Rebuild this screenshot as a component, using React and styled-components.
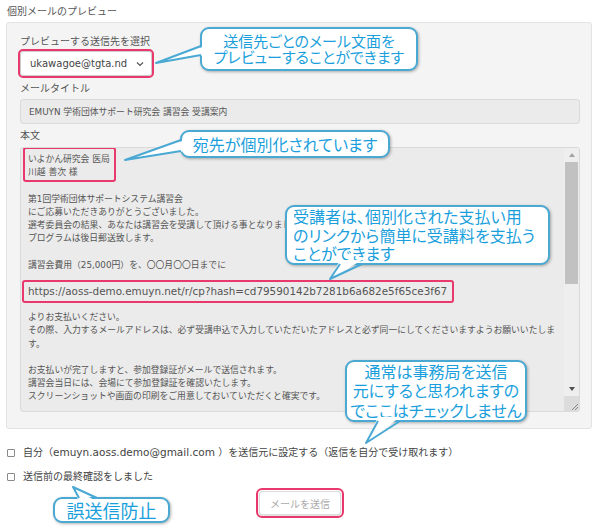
import styled, { createGlobalStyle } from "styled-components";

const GlobalStyle = createGlobalStyle`
  html, body { margin: 0; padding: 0; background: #fff; }
  body { font-family: "DejaVu Sans", "Noto Sans CJK JP", sans-serif; }
`;

const PINK = "#e8386c";
const BLUE = "#1b9fdc";
const BLUE_LINE = "#4aa9d3";

const Page = styled.div`
  position: relative;
  width: 600px;
  height: 529px;
  overflow: hidden;
  color: #555;
  font-family: "DejaVu Sans", "Noto Sans CJK JP", sans-serif;
`;

const Heading = styled.div`
  padding: 5px 0 0 7px;
  font-size: 10px;
  line-height: 14px;
  color: #555;
`;

const Panel = styled.div`
  margin: 3px 8px 0 6px;
  border: 1px solid #e3e3e3;
  border-radius: 3px;
  background: #f4f4f4;
  padding: 12px 11px 16px 13px;
  display: flex;
  flex-direction: column;
`;

const Label = styled.div`
  font-size: 10px;
  line-height: 14px;
  color: #555;
  margin-top: ${(p) => p.$gap || 0}px;
`;

const Select = styled.div`
  margin-top: 2px;
  width: 132px;
  height: 25px;
  box-sizing: border-box;
  background: #fff;
  border: 1px solid #ccc;
  border-radius: 3px;
  display: flex;
  align-items: center;
  justify-content: space-between;
  padding: 0 7px 0 9px;
  font-size: 10px;
  color: #444;
  outline: 2px solid ${PINK};
  outline-offset: 0px;
`;

const Field = styled.div`
  margin-top: 3px;
  height: 25px;
  box-sizing: border-box;
  background: #ebebeb;
  border: 1px solid #dadada;
  border-radius: 3px;
  display: flex;
  align-items: center;
  padding-left: 8px;
  font-size: 8.8px;
  color: #555;
`;

const TextArea = styled.div`
  margin-top: 4px;
  height: 265px;
  box-sizing: border-box;
  background: #ebebeb;
  border: 1px solid #dadada;
  border-radius: 3px;
  display: flex;
  overflow: hidden;
`;

const Body = styled.div`
  flex: 1;
  padding: 5px 0 0 7px;
  overflow: hidden;
  font-size: 8.8px;
  line-height: 13.2px;
  color: #555;
  white-space: nowrap;
`;

const Line = styled.div`
  height: 13.2px;
  font-size: ${(p) => (p.$url ? "10.4px" : "inherit")};
`;

const Mark = styled.span`
  position: relative;
  display: inline-block;
  &::after {
    content: "";
    position: absolute;
    top: ${(p) => p.$t}px;
    bottom: ${(p) => p.$b}px;
    left: ${(p) => p.$l}px;
    right: ${(p) => p.$r}px;
    border: 2px solid ${PINK};
    border-radius: 3px;
  }
`;

const ScrollBar = styled.div`
  width: 15px;
  display: flex;
  flex-direction: column;
  background: #eeeeee;
`;

const ArrowBtn = styled.div`
  height: 14px;
  display: flex;
  align-items: center;
  justify-content: center;
  &::before {
    content: "";
    border-left: 3.5px solid transparent;
    border-right: 3.5px solid transparent;
    ${(p) =>
      p.$down
        ? "border-top: 4px solid #505050;"
        : "border-bottom: 4px solid #a3a3a3;"}
  }
`;

const Track = styled.div`
  flex: 1;
`;

const Thumb = styled.div`
  height: 122px;
  background: #c1c1c1;
  margin: 0 1px;
`;

const Corner = styled.div`
  height: 15px;
  background: #dcdcdc;
  display: flex;
  align-items: flex-end;
  justify-content: flex-end;
`;

const CheckRow = styled.label`
  display: flex;
  align-items: center;
  gap: 8px;
  margin: ${(p) => p.$gap}px 0 0 7px;
  font-size: 10px;
  line-height: 14px;
  color: #444;
`;

const Email = styled.span`
  font-size: 10.5px;
`;

const Box = styled.span`
  width: 6px;
  height: 6px;
  border: 1px solid #8a8a8a;
  border-radius: 1px;
  background: #fff;
`;

const ButtonRow = styled.div`
  display: flex;
  justify-content: center;
  margin-top: 7px;
`;

const SendButton = styled.button`
  width: 82px;
  height: 24px;
  background: #fff;
  border: 1px solid #dcdcdc;
  border-radius: 3px;
  box-shadow: 0 1px 2px rgba(0, 0, 0, 0.15);
  color: #aaa;
  font-family: inherit;
  font-size: 10px;
  outline: 2px solid ${PINK};
  outline-offset: 1px;
`;

const Callout = styled.div`
  position: absolute;
  left: ${(p) => p.$x}px;
  top: ${(p) => p.$y}px;
  width: ${(p) => p.$w}px;
  height: ${(p) => p.$h}px;
  box-sizing: border-box;
  background: #fff;
  border: 2px solid ${BLUE_LINE};
  border-radius: 9px;
  box-shadow: 1px 1px 3px rgba(0, 0, 0, 0.3);
  display: flex;
  flex-direction: column;
  justify-content: center;
  align-items: ${(p) => (p.$left ? "flex-start" : "center")};
  padding-left: ${(p) => (p.$left ? 6 : 0)}px;
  color: ${BLUE};
  font-family: "Noto Sans CJK JP", sans-serif;
  font-feature-settings: "palt";
  font-size: ${(p) => p.$fs}px;
  line-height: ${(p) => p.$lh}px;
  white-space: nowrap;
`;

const TailLayer = styled.svg`
  position: absolute;
  left: 0;
  top: 0;
  pointer-events: none;
`;

const tails = [
  { b1: [201, 46], b2: [201, 55], tip: [156, 63], d: [4, 0] },
  { b1: [181, 140], b2: [181, 151], tip: [125, 160], d: [4, 0] },
  { b1: [340, 264], b2: [362, 264], tip: [330, 279], d: [0, -4] },
  { b1: [378, 421], b2: [400, 421], tip: [366, 443], d: [0, -4] },
  { b1: [79, 498], b2: [97, 498], tip: [73, 487], d: [0, 4] },
];

function Tails() {
  return (
    <TailLayer width="600" height="529">
      {tails.map((t, i) => {
        const [dx, dy] = t.d;
        const fill = `${t.b1[0] + dx},${t.b1[1] + dy} ${t.tip.join(",")} ${t.b2[0] + dx},${t.b2[1] + dy}`;
        const line = `${t.b1.join(",")} ${t.tip.join(",")} ${t.b2.join(",")}`;
        return (
          <g key={i}>
            <polygon points={fill} fill="#fff" />
            <polyline points={line} fill="none" stroke={BLUE_LINE} strokeWidth="2" strokeLinejoin="round" />
          </g>
        );
      })}
    </TailLayer>
  );
}

const bodyLines = [
  null,
  "",
  "第1回学術団体サポートシステム講習会",
  "にご応募いただきありがとうございました。",
  "選考委員会の結果、あなたは講習会を受講して頂ける事となりました。",
  "プログラムは後日郵送致します。",
  "",
  "講習会費用（25,000円）を、〇〇月〇〇日までに",
  "",
  "URL",
  "",
  "よりお支払いください。",
  "その際、入力するメールアドレスは、必ず受講申込で入力していただいたアドレスと必ず同一にしてくださいますようお願いいたしま",
  "す。",
  "",
  "お支払いが完了しますと、参加登録証がメールで送信されます。",
  "講習会当日には、会場にて参加登録証を確認いたします。",
  "スクリーンショットや画面の印刷をご用意しておいていただくと確実です。",
  "",
];

export default function App() {
  return (
    <Page>
      <GlobalStyle />
      <Heading>個別メールのプレビュー</Heading>
      <Panel>
        <Label>プレビューする送信先を選択</Label>
        <Select>
          <span>ukawagoe@tgta.nd</span>
          <svg width="8" height="6" viewBox="0 0 8 6">
            <path d="M1 1.5 L4 4.5 L7 1.5" fill="none" stroke="#555" strokeWidth="1.2" />
          </svg>
        </Select>
        <Label $gap={6}>メールタイトル</Label>
        <Field>EMUYN 学術団体サポート研究会 講習会 受講案内</Field>
        <Label $gap={5}>本文</Label>
        <TextArea>
          <Body>
            {bodyLines.map((l, i) => {
              if (l === null)
                return (
                  <Mark key={i} $t={-6} $b={-3} $l={-5} $r={-6}>
                    <Line>いよかん研究会 医局</Line>
                    <Line>川越 善次 様</Line>
                  </Mark>
                );
              if (l === "URL")
                return (
                  <Line key={i} $url>
                    <Mark $t={-5} $b={-5} $l={-6} $r={-7}>
                      https://aoss-demo.emuyn.net/r/cp?hash=cd79590142b7281b6a682e5f65ce3f67
                    </Mark>
                  </Line>
                );
              return <Line key={i}>{l || "\u00a0"}</Line>;
            })}
          </Body>
          <ScrollBar>
            <ArrowBtn />
            <Track>
              <Thumb />
            </Track>
            <ArrowBtn $down />
            <Corner>
              <svg width="10" height="10" viewBox="0 0 10 10">
                <path d="M9 3 L3 9 M9 6 L6 9" stroke="#888" strokeWidth="1" />
              </svg>
            </Corner>
          </ScrollBar>
        </TextArea>
      </Panel>

      <CheckRow $gap={16}>
        <Box />
        <span>
          自分（<Email>emuyn.aoss.demo@gmail.com </Email>）を送信元に設定する（返信を自分で受け取れます）
        </span>
      </CheckRow>
      <CheckRow $gap={10}>
        <Box />
        送信前の最終確認をしました
      </CheckRow>
      <ButtonRow>
        <SendButton>メールを送信</SendButton>
      </ButtonRow>

      <Callout $x={200} $y={27} $w={218} $h={44} $fs={15} $lh={16}>
        <div>送信先ごとのメール文面を</div>
        <div>プレビューすることができます</div>
      </Callout>
      <Callout $x={180} $y={130} $w={210} $h={28} $fs={16} $lh={17}>
        <div>宛先が個別化されています</div>
      </Callout>
      <Callout $x={285} $y={205} $w={265} $h={60} $fs={16} $lh={18.5} $left>
        <div>受講者は、個別化された支払い用</div>
        <div>のリンクから簡単に受講料を支払う</div>
        <div>ことができます</div>
      </Callout>
      <Callout $x={345} $y={360} $w={182} $h={62} $fs={16} $lh={19.5}>
        <div>通常は事務局を送信</div>
        <div>元にすると思われますの</div>
        <div>でここはチェックしません</div>
      </Callout>
      <Callout $x={53} $y={497} $w={117} $h={26} $fs={18} $lh={20}>
        <div>誤送信防止</div>
      </Callout>
      <Tails />
    </Page>
  );
}
